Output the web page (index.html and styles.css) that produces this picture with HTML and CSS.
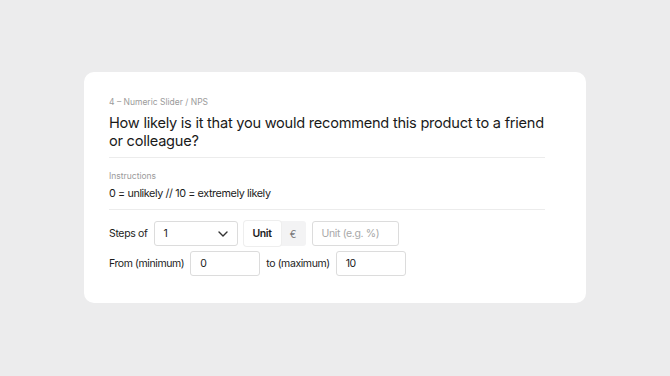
FILE: index.html
```html
<!DOCTYPE html>
<html lang="en">
<head>
<meta charset="utf-8">
<link rel="stylesheet" href="styles.css">
</head>
<body>
<div class="page">
  <div class="card">
    <div class="content">
      <div class="eyebrow">4 – Numeric Slider / NPS</div>
      <div class="title">How likely is it that you would recommend this product to a friend or colleague?</div>
      <div class="sep"></div>
      <div class="eyebrow instr-label">Instructions</div>
      <div class="instr">0 = unlikely // 10 = extremely likely</div>
      <div class="sep sep2"></div>
      <div class="row">
        <span class="lbl">Steps of</span>
        <div class="field select">
          <span>1</span>
          <svg width="10" height="6" viewBox="0 0 10 6"><path d="M1 1l4 4 4-4" fill="none" stroke="#333" stroke-width="1.4" stroke-linecap="round" stroke-linejoin="round"/></svg>
        </div>
        <div class="seg">
          <span class="seg-on">Unit</span>
          <span class="seg-off">€</span>
        </div>
        <div class="field unit"><span class="ph">Unit (e.g. %)</span></div>
      </div>
      <div class="row row2">
        <span class="lbl">From (minimum)</span>
        <div class="field num"><span>0</span></div>
        <span class="lbl">to (maximum)</span>
        <div class="field num"><span>10</span></div>
      </div>
    </div>
  </div>
</div>
</body>
</html>
```
FILE: styles.css
```css
* { box-sizing: border-box; }
html, body { margin: 0; padding: 0; }
body {
  width: 670px;
  height: 376px;
  background: #ececed;
  font-family: Inter, "Liberation Sans", sans-serif;
  color: #1c1c1c;
  overflow: hidden;
}
.page {
  padding: 72px 0 0 84px;
}
.card {
  width: 502px;
  height: 231px;
  background: #ffffff;
  border-radius: 10px;
  padding: 24px 0 0 25px;
}
.content { width: 436px; }
.eyebrow {
  font-size: 8.5px;
  line-height: 12px;
  color: #9b9b9b;
}
.title {
  margin-top: 7px;
  margin-right: -10px;
  font-size: 14.6px;
  line-height: 17.5px;
  color: #1a1a1a;
  letter-spacing: -0.25px;
}
.sep {
  margin-top: 7px;
  height: 1px;
  background: #ececec;
}
.instr-label { margin-top: 12px; }
.instr {
  margin-top: 5px;
  font-size: 10.8px;
  line-height: 14px;
  letter-spacing: -0.4px;
}
.sep2 { margin-top: 8px; }
.row {
  margin-top: 11px;
  display: flex;
  align-items: center;
  height: 25px;
  font-size: 10.5px;
  letter-spacing: -0.35px;
}
.row2 { margin-top: 5px; }
.lbl { margin-right: 6px; }
.row2 .lbl { letter-spacing: -0.4px; margin-right: 6px; }
.row2 .lbl + .field { margin-right: 6px; }
.field {
  height: 25px;
  border: 1px solid #dcdcdc;
  border-radius: 3px;
  display: flex;
  align-items: center;
  padding: 0 9px;
  background: #fff;
}
.select {
  width: 84px;
  justify-content: space-between;
  padding-right: 9px;
  margin-right: 6px;
}
.seg {
  display: flex;
  height: 25px;
  background: #f3f3f4;
  border-radius: 3px;
  margin-right: 6px;
}
.seg-on {
  width: 37px;
  background: #fff;
  border-radius: 3px;
  box-shadow: 0 0 0 1px #eeeeee;
  display: flex;
  align-items: center;
  justify-content: center;
  font-weight: 600;
}
.seg-off {
  width: 25px;
  display: flex;
  align-items: center;
  justify-content: center;
  color: #777;
  font-size: 10px;
}
.unit { width: 87px; }
.ph { color: #a8a8a8; }
.num { width: 70px; }
```
